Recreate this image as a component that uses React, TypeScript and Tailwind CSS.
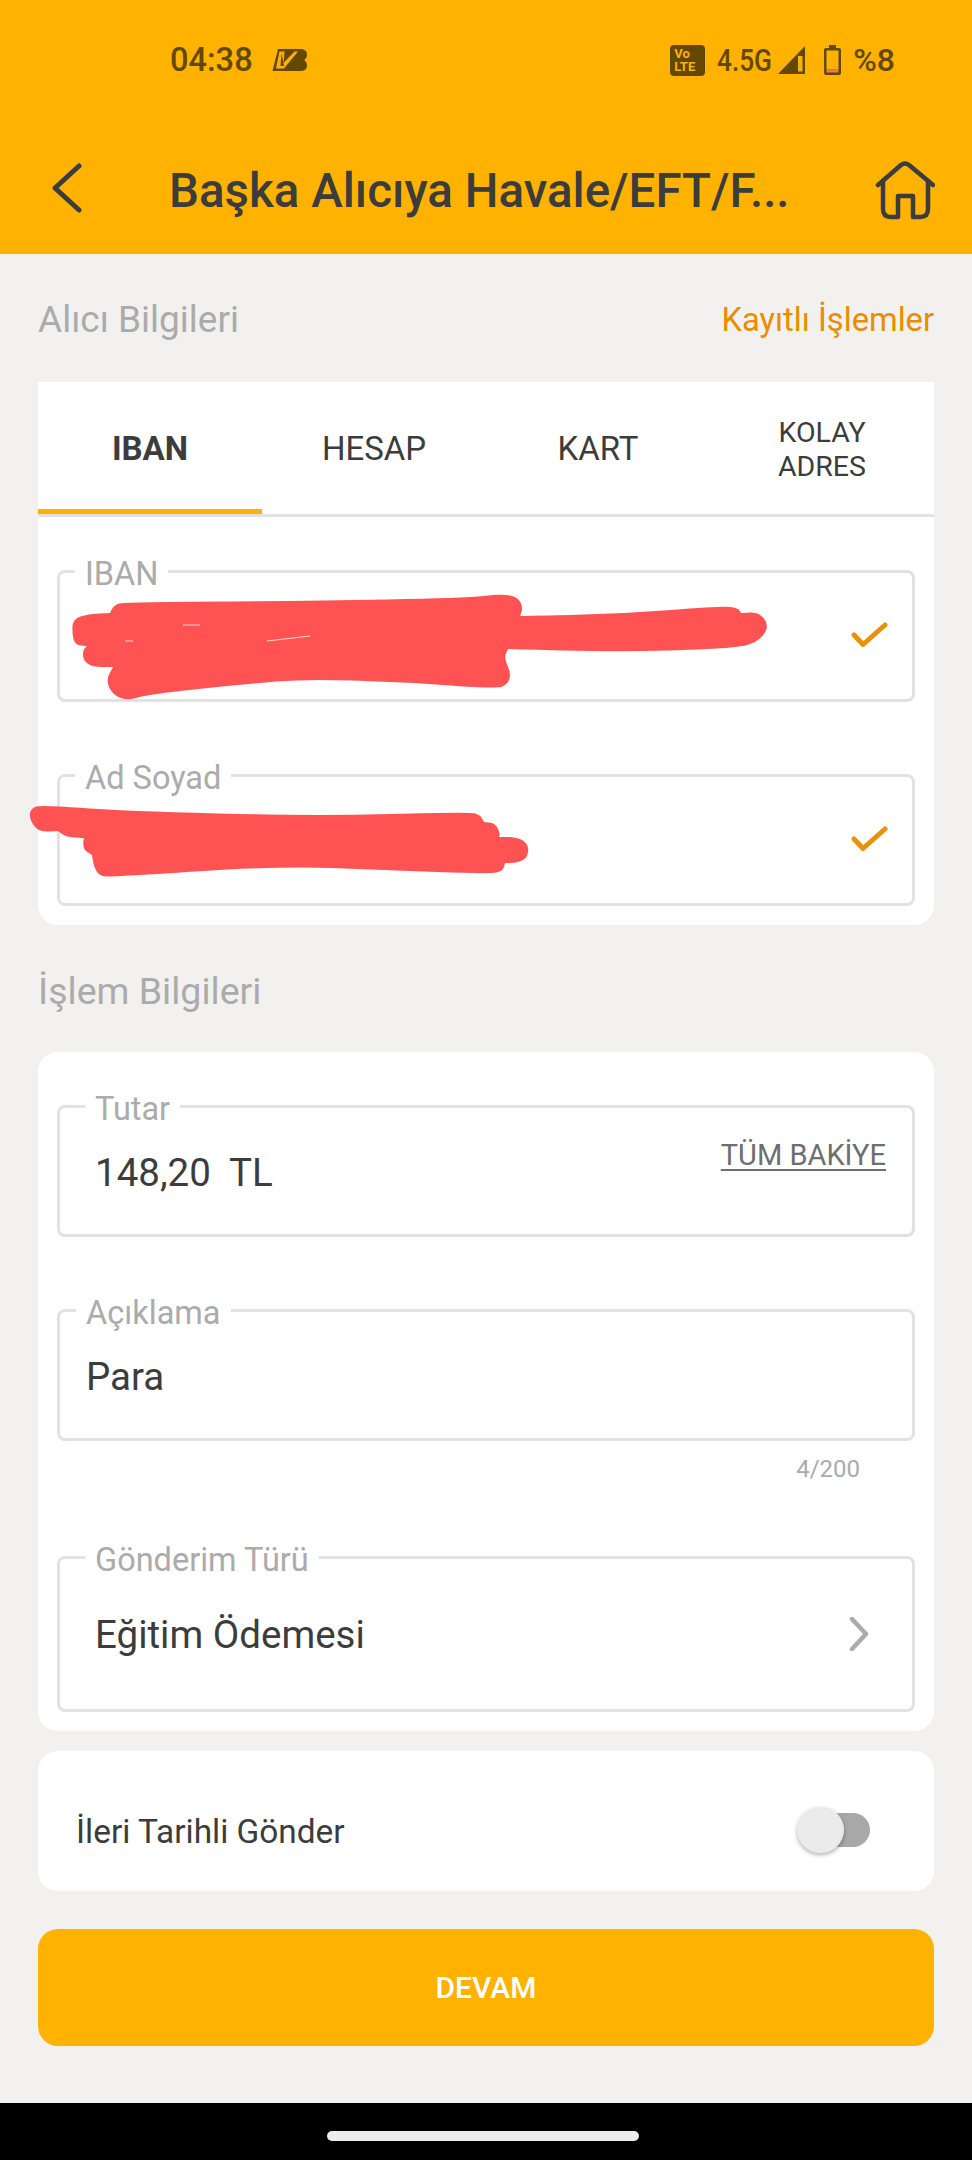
import type { ReactNode } from "react";

type Pt = [number, number];

// marker strokes hiding the name and the IBAN, traced from the screenshot
// (a point listed twice is a sharp notch between two strokes)
const SCRIBBLE_IBAN: Pt[] = [
  [72, 633], [73, 619], [88, 614], [110, 613], [110, 613], [114, 605], [124, 602], [310, 601], [465, 598], [502, 594], [518, 597], [523, 608],
  [520, 616], [520, 616], [620, 614], [722, 606], [738, 608], [741, 613], [741, 613], [759, 612], [769, 625], [762, 638], [748, 646], [713, 649],
  [620, 652], [508, 649], [508, 649], [504, 658], [511, 673], [508, 684], [497, 689], [403, 682], [304, 679], [248, 684],
  [149, 694], [127, 701], [112, 694], [106, 680], [113, 667], [113, 667], [92, 667], [83, 660], [83, 650], [87, 646], [87, 646], [75, 645],
];
const SCRIBBLE_NAME: Pt[] = [
  [29, 818], [31, 808], [42, 805], [124, 811], [310, 816], [471, 812], [480, 815], [484, 822], [484, 822], [495, 823], [500, 833], [499, 837], [499, 837],
  [516, 837], [526, 842], [529, 850], [526, 859], [516, 863], [505, 863], [505, 863], [503, 871], [490, 874], [384, 870], [279, 866], [112, 877],
  [100, 876], [94, 868], [92, 855], [92, 855], [84, 850], [83, 842], [84, 838], [84, 838], [66, 837], [58, 831], [58, 831], [38, 832],
];

// the few pale gaps the marker left inside the first scribble
const SCRIBBLE_GAPS = ["M125 641 L133 641", "M267 641 L310 636", "M183 625 L200 625"];

const smooth = (pts: Pt[]) => {
  const mid = (a: Pt, b: Pt) => `${(a[0] + b[0]) / 2} ${(a[1] + b[1]) / 2}`;
  let d = `M${mid(pts[pts.length - 1], pts[0])}`;
  pts.forEach((p, i) => {
    d += ` Q${p[0]} ${p[1]} ${mid(p, pts[(i + 1) % pts.length])}`;
  });
  return d + "Z";
};

const Check = () => (
  <svg viewBox="0 0 38 28" className="w-[38px] h-[28px] shrink-0 ml-auto mr-[23px]" fill="none">
    <path d="M3 13 L12 22.5 L34 3" stroke="#E8920C" strokeWidth="5" strokeLinecap="round" strokeLinejoin="round" />
  </svg>
);

const Field = ({
  label,
  labelClass,
  className,
  children,
}: {
  label: string;
  labelClass: string;
  className: string;
  children?: ReactNode;
}) => (
  <div className={`relative mx-[19px] flex items-center rounded-[8px] border-[3px] border-[#E2E2E2] ${className}`}>
    <span className={`absolute top-[-16px] bg-white px-[10px] text-[32.5px] leading-[34px] text-[#ABABAB] ${labelClass}`}>
      {label}
    </span>
    {children}
  </div>
);

const StatusBar = () => (
  <div className="flex items-center h-[40px] mt-[40px] pl-[170px] pr-[77px] text-[32px] font-medium text-[#654800]">
    <span className="text-[32.6px]">04:38</span>
    <svg viewBox="0 0 36 24" className="w-[36px] h-[24px] ml-[19px]">
      <path d="M6 1 H28 Q35 1 35 6.5 Q35 10 32 12 Q35 14 35 17.5 Q35 23 28 23 H0.5 Z" fill="#654800" />
      <path d="M7.5 3.5 H12.5 L11.5 15 L22.5 3.5 H26 L12 20.5 H4 Z" fill="#FFB300" />
      <path d="M9.5 5 L8.5 18 H12 Z" fill="#654800" />
    </svg>
    <div className="ml-auto w-[35px] h-[31px] rounded-[4px] bg-[#654800] flex flex-col items-center justify-center text-[13px] leading-[13px] font-bold text-[#FFB300]">
      <span className="self-start pl-[4px]">Vo</span>
      <span className="self-start pl-[4px]">LTE</span>
    </div>
    <span className="ml-[12px] w-[53px] scale-x-[0.82] origin-left whitespace-nowrap">4.5G</span>
    <svg viewBox="0 0 27 28" className="w-[27px] h-[28px] ml-[8px]">
      <path d="M27 0 V28 H0 Z" fill="#654800" />
      <path d="M20 10 H24.5 V25.5 H20 Z" fill="#FFB300" />
    </svg>
    <svg viewBox="0 0 17 30" className="w-[17px] h-[30px] ml-[19px]">
      <path d="M5 0 H12 V3 H15 Q17 3 17 5 V28 Q17 30 15 30 H2 Q0 30 0 28 V5 Q0 3 2 3 H5 Z" fill="#654800" />
      <rect x="2.5" y="5.5" width="12" height="19" fill="#FFB300" />
      <rect x="2.5" y="24.5" width="12" height="3" fill="#F57C4A" />
    </svg>
    <span className="ml-[12px]">%8</span>
  </div>
);

const Header = () => (
  <header className="h-[254px] shrink-0 bg-[#FFB300]">
    <StatusBar />
    <div className="flex items-center h-[80px] mt-[68px]">
      <div className="w-[169px] pl-[52px] shrink-0">
        <svg viewBox="0 0 30 50" className="w-[30px] h-[50px]" fill="none">
          <path d="M27 3 L3 25 L27 47" stroke="#3C3C3C" strokeWidth="5" strokeLinecap="round" strokeLinejoin="round" />
        </svg>
      </div>
      <h1 className="flex-1 pt-[8px] text-[47.5px] font-medium text-[#3C3C3C] whitespace-nowrap">Başka Alıcıya Havale/EFT/F...</h1>
      <svg viewBox="0 0 60 60" className="w-[60px] h-[60px] mr-[37px] mb-[-4px]" fill="none" stroke="#3C3C3C" strokeWidth="4.5" strokeLinecap="round" strokeLinejoin="round">
        <path d="M3 25 L26 5 Q30 2 34 5 L58 25" />
        <path d="M8 22 V49 Q8 57 16 57 H23 V36 H38 V57 H45 Q53 57 53 49 V22" />
      </svg>
    </div>
  </header>
);

const TABS = ["HESAP", "KART"];

const Tabs = () => (
  <div className="flex border-b-[3px] border-[#E2E2E2] text-[#3C3C3C]">
    <div className="w-1/4 h-[132px] flex items-center justify-center border-b-[5px] border-[#FFB300] text-[33px] font-bold pt-[7px]">
      IBAN
    </div>
    {TABS.map((tab) => (
      <div key={tab} className="w-1/4 h-[132px] flex items-center justify-center pt-[2px] text-[33px]">
        {tab}
      </div>
    ))}
    <div className="w-1/4 h-[132px] flex items-center justify-center pt-[3px] text-center text-[28.5px] leading-[34px]">
      KOLAY<br />ADRES
    </div>
  </div>
);

export default function App() {
  return (
    <div className="relative w-[972px] h-[2160px] flex flex-col bg-[#F2F1EF] overflow-hidden font-['Roboto',sans-serif]">
      <Header />

      <main className="flex flex-col px-[38px]">
        <div className="flex items-center justify-between h-[128px] pt-[4px]">
          <span className="text-[37px] text-[#ABABAB]">Alıcı Bilgileri</span>
          <span className="pt-[2px] text-[32.7px] text-[#E88E00]">Kayıtlı İşlemler</span>
        </div>

        <section className="bg-white rounded-b-[20px] pb-[19px]">
          <Tabs />
          <Field label="IBAN" labelClass="left-[15px]" className="h-[132px] mt-[53px]">
            <Check />
          </Field>
          <Field label="Ad Soyad" labelClass="left-[15px]" className="h-[132px] mt-[72px]">
            <Check />
          </Field>
        </section>

        <div className="flex items-center h-[127px] pt-[5px] text-[37.5px] text-[#ABABAB]">İşlem Bilgileri</div>

        <section className="bg-white rounded-[20px] pt-[53px] pb-[19px] text-[38.5px] text-[#3C3C3C]">
          <Field label="Tutar" labelClass="left-[25px]" className="h-[132px] justify-between pl-[35px] pr-[26px]">
            <span className="whitespace-pre pt-[4px]">148,20  TL</span>
            <span className="mb-[30px] text-[29px] underline underline-offset-4 text-[#6E6E6E]">TÜM BAKİYE</span>
          </Field>
          <Field label="Açıklama" labelClass="left-[16px]" className="h-[132px] mt-[72px] pl-[26px]">
            <span className="pt-[4px]">Para</span>
          </Field>
          <div className="flex justify-end h-[115px] pt-[14px] pr-[74px] text-[24px] leading-[28px] text-[#ABABAB]">4/200</div>
          <Field label="Gönderim Türü" labelClass="left-[25px]" className="h-[156px] justify-between pl-[35px] pr-[43px]">
            <span className="pt-[2px]">Eğitim Ödemesi</span>
            <svg viewBox="0 0 20 34" className="w-[20px] h-[34px]" fill="none">
              <path d="M3 2 L17 17 L3 32" stroke="#ABABAB" strokeWidth="4.5" strokeLinecap="round" strokeLinejoin="round" />
            </svg>
          </Field>
        </section>

        <section className="flex items-center justify-between h-[140px] mt-[20px] bg-white rounded-[20px] pt-[18px] pl-[38px] pr-[64px] text-[33.4px] text-[#3C3C3C]">
          <span className="pt-[5px]">İleri Tarihli Gönder</span>
          <div className="relative w-[60px] h-[34px] rounded-full bg-[#A8A8A8]">
            <div className="absolute left-[-13px] top-[-6px] w-[47px] h-[46px] rounded-full bg-[#EBEBEB] shadow-[0_2px_4px_rgba(0,0,0,0.3)]" />
          </div>
        </section>

        <button className="h-[117px] mt-[38px] rounded-[20px] bg-[#FFB300] text-[30px] font-medium text-white">DEVAM</button>
      </main>

      <div className="mt-auto h-[57px] shrink-0 bg-black flex justify-center pt-[28px]">
        <div className="w-[312px] h-[10px] mr-[6px] rounded-full bg-[#EDEDED]" />
      </div>

      <svg viewBox="0 590 972 300" className="absolute left-0 top-[590px] w-[972px] h-[300px]" fill="#FF5252">
        <path d={smooth(SCRIBBLE_IBAN)} />
        <path d={smooth(SCRIBBLE_NAME)} />
        {SCRIBBLE_GAPS.map((d) => (
          <path key={d} d={d} stroke="#FFD9D9" strokeWidth="1" fill="none" />
        ))}
      </svg>
    </div>
  );
}
